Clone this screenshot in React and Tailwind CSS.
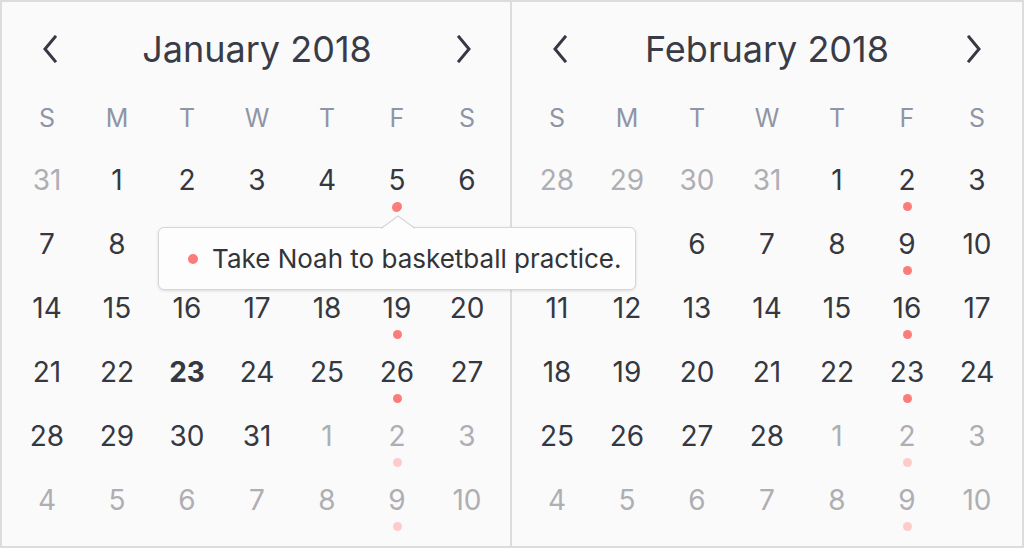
import React from 'react';

const dayNames = ['S', 'M', 'T', 'W', 'T', 'F', 'S'];

// n: day number, m: 0 = this month, 1 = other month, dot: event marker
const january = [
  [31, 1], [1, 0], [2, 0], [3, 0], [4, 0], [5, 0, 1], [6, 0],
  [7, 0], [8, 0], [9, 0], [10, 0], [11, 0], [12, 0, 1], [13, 0],
  [14, 0], [15, 0], [16, 0], [17, 0], [18, 0], [19, 0, 1], [20, 0],
  [21, 0], [22, 0], [23, 0], [24, 0], [25, 0], [26, 0, 1], [27, 0],
  [28, 0], [29, 0], [30, 0], [31, 0], [1, 1], [2, 1, 1], [3, 1],
  [4, 1], [5, 1], [6, 1], [7, 1], [8, 1], [9, 1, 1], [10, 1],
];

const february = [
  [28, 1], [29, 1], [30, 1], [31, 1], [1, 0], [2, 0, 1], [3, 0],
  [4, 0], [5, 0], [6, 0], [7, 0], [8, 0], [9, 0, 1], [10, 0],
  [11, 0], [12, 0], [13, 0], [14, 0], [15, 0], [16, 0, 1], [17, 0],
  [18, 0], [19, 0], [20, 0], [21, 0], [22, 0], [23, 0, 1], [24, 0],
  [25, 0], [26, 0], [27, 0], [28, 0], [1, 1], [2, 1, 1], [3, 1],
  [4, 1], [5, 1], [6, 1], [7, 1], [8, 1], [9, 1, 1], [10, 1],
];

const Chevron = ({ dir }) => (
  <svg width="16" height="28" viewBox="0 0 16 28" fill="none">
    <path
      d={dir === 'left' ? 'M13 2 L3 14 L13 26' : 'M3 2 L13 14 L3 26'}
      stroke="#363943"
      strokeWidth="3"
      strokeLinecap="square"
    />
  </svg>
);

const Month = ({ title, days, today }) => (
  <div className="w-[490px]">
    <div className="h-[94px] px-[30px] flex items-center justify-between">
      <Chevron dir="left" />
      <span className="text-[36px] leading-none text-[#393c46]">{title}</span>
      <Chevron dir="right" />
    </div>
    <div className="grid grid-cols-7 h-[44px] items-center">
      {dayNames.map((d, i) => (
        <span key={i} className="text-center text-[25px] leading-none text-[#8f95a4]">{d}</span>
      ))}
    </div>
    <div className="grid grid-cols-7 mt-2">
      {days.map(([n, other, dot], i) => (
        <div key={i} className="h-[64px] flex flex-col items-center pt-4">
          <span
            className={`h-8 leading-8 text-[28px] ${other ? 'text-[#aeaeb3]' : 'text-[#353841]'} ${
              !other && n === today ? 'font-bold' : ''
            }`}
          >
            {n}
          </span>
          {dot && (
            <span className={`mt-[6px] w-[9px] h-[9px] rounded-full ${other ? 'bg-[#ffcaca]' : 'bg-[#fd7b7b]'}`} />
          )}
        </div>
      ))}
    </div>
  </div>
);

export default function App() {
  return (
    <div
      className="w-[1024px] h-[548px] border-2 border-[#dcdcdc] bg-[#fafafa] flex overflow-hidden"
      style={{ fontFamily: 'Inter, "Noto Sans", sans-serif' }}
    >
      <div className="relative w-[510px] pl-[10px] border-r-2 border-[#dcdcdc]">
        <Month title="January 2018" days={january} today={23} />
        <div className="absolute z-10 left-[156px] top-[225px] w-[478px] h-[63px] rounded-md border border-[#d6d6d6] bg-[#fdfdfd] shadow-[0_1px_3px_rgba(0,0,0,0.12)] flex items-center pl-[29px] gap-[14px]">
          <svg className="absolute left-[222px] -top-[13px]" width="34" height="14" viewBox="0 0 34 14">
            <path d="M0 14 L17 1 L34 14 Z" fill="#fdfdfd" />
            <path d="M0 13.5 L17 1 L34 13.5" fill="none" stroke="#d6d6d6" strokeWidth="1.2" />
          </svg>
          <span className="w-[10px] h-[10px] rounded-full bg-[#fd7b7b]" />
          <span className="text-[26px] leading-none text-[#333438]">Take Noah to basketball practice.</span>
        </div>
        <span className="absolute z-20 left-[390px] top-[201px] w-[9px] h-[9px] rounded-full bg-[#fd7b7b]" />
      </div>
      <div className="flex-1 pl-[10px]">
        <Month title="February 2018" days={february} today={0} />
      </div>
    </div>
  );
}
